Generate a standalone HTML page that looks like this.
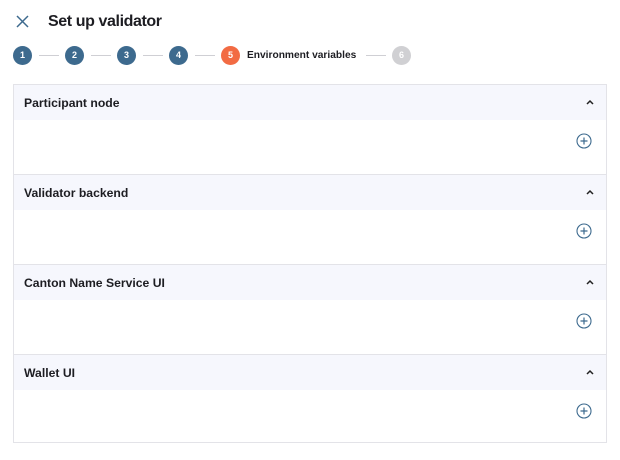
<!DOCTYPE html>
<html><head><meta charset="utf-8"><style>
*{box-sizing:border-box;margin:0;padding:0}
body{width:620px;height:460px;background:#fff;font-family:"Liberation Sans",sans-serif;color:#1d1d22;position:relative;overflow:hidden}
.title{position:absolute;left:48px;top:13px;font-size:16px;font-weight:bold;letter-spacing:-0.4px}
.x{position:absolute;left:15px;top:14px}
.step{position:absolute;top:46px;width:19px;height:19px;border-radius:50%;background:#3d6a8e;color:#fff;font-size:9px;font-weight:bold;text-align:center;line-height:19px}
.ln{position:absolute;top:55px;height:1px;background:#cfcfd4;width:20px}
.lbl{position:absolute;left:247px;top:50px;font-size:10.2px;font-weight:bold}
.box{position:absolute;left:13px;top:84px;width:594px;height:359px;border:1px solid #e3e3e8}
.sec{height:90px;border-bottom:1px solid #e3e3e8;position:relative}
.sec:last-child{border-bottom:none}
.hd{height:35px;background:#f6f7fd;padding-left:10px;line-height:36px;font-size:12.2px;font-weight:bold;position:relative}
.chev{position:absolute;right:12px;top:14px}
.plus{position:absolute;right:14px;top:48px}
</style></head><body>
<svg class="x" width="15" height="15" viewBox="0 0 15 15"><path d="M2 2L13 13M13 2L2 13" stroke="#3d6a8e" stroke-width="1.5" fill="none"/></svg>
<div class="title">Set up validator</div>
<div class="step" style="left:13px">1</div><div class="ln" style="left:39px"></div>
<div class="step" style="left:65px">2</div><div class="ln" style="left:91px"></div>
<div class="step" style="left:117px">3</div><div class="ln" style="left:143px"></div>
<div class="step" style="left:169px">4</div><div class="ln" style="left:195px"></div>
<div class="step" style="left:221px;background:#f26b43">5</div>
<div class="lbl">Environment variables</div><div class="ln" style="left:366px"></div>
<div class="step" style="left:392px;background:#d0d0d3">6</div>
<div class="box">
<div class="sec"><div class="hd">Participant node<svg class="chev" width="8" height="6" viewBox="0 0 8 6"><path d="M1 5L4 2L7 5" stroke="#222" stroke-width="1.5" fill="none"/></svg></div><svg class="plus" width="16" height="16" viewBox="0 0 16 16"><circle cx="8" cy="8" r="7" stroke="#3d6a8e" stroke-width="1.1" fill="none"/><path d="M8 4.5V11.5M4.5 8H11.5" stroke="#3d6a8e" stroke-width="1.2"/></svg></div>
<div class="sec"><div class="hd">Validator backend<svg class="chev" width="8" height="6" viewBox="0 0 8 6"><path d="M1 5L4 2L7 5" stroke="#222" stroke-width="1.5" fill="none"/></svg></div><svg class="plus" width="16" height="16" viewBox="0 0 16 16"><circle cx="8" cy="8" r="7" stroke="#3d6a8e" stroke-width="1.1" fill="none"/><path d="M8 4.5V11.5M4.5 8H11.5" stroke="#3d6a8e" stroke-width="1.2"/></svg></div>
<div class="sec"><div class="hd">Canton Name Service UI<svg class="chev" width="8" height="6" viewBox="0 0 8 6"><path d="M1 5L4 2L7 5" stroke="#222" stroke-width="1.5" fill="none"/></svg></div><svg class="plus" width="16" height="16" viewBox="0 0 16 16"><circle cx="8" cy="8" r="7" stroke="#3d6a8e" stroke-width="1.1" fill="none"/><path d="M8 4.5V11.5M4.5 8H11.5" stroke="#3d6a8e" stroke-width="1.2"/></svg></div>
<div class="sec"><div class="hd">Wallet UI<svg class="chev" width="8" height="6" viewBox="0 0 8 6"><path d="M1 5L4 2L7 5" stroke="#222" stroke-width="1.5" fill="none"/></svg></div><svg class="plus" width="16" height="16" viewBox="0 0 16 16"><circle cx="8" cy="8" r="7" stroke="#3d6a8e" stroke-width="1.1" fill="none"/><path d="M8 4.5V11.5M4.5 8H11.5" stroke="#3d6a8e" stroke-width="1.2"/></svg></div>
</div>
</body></html>
